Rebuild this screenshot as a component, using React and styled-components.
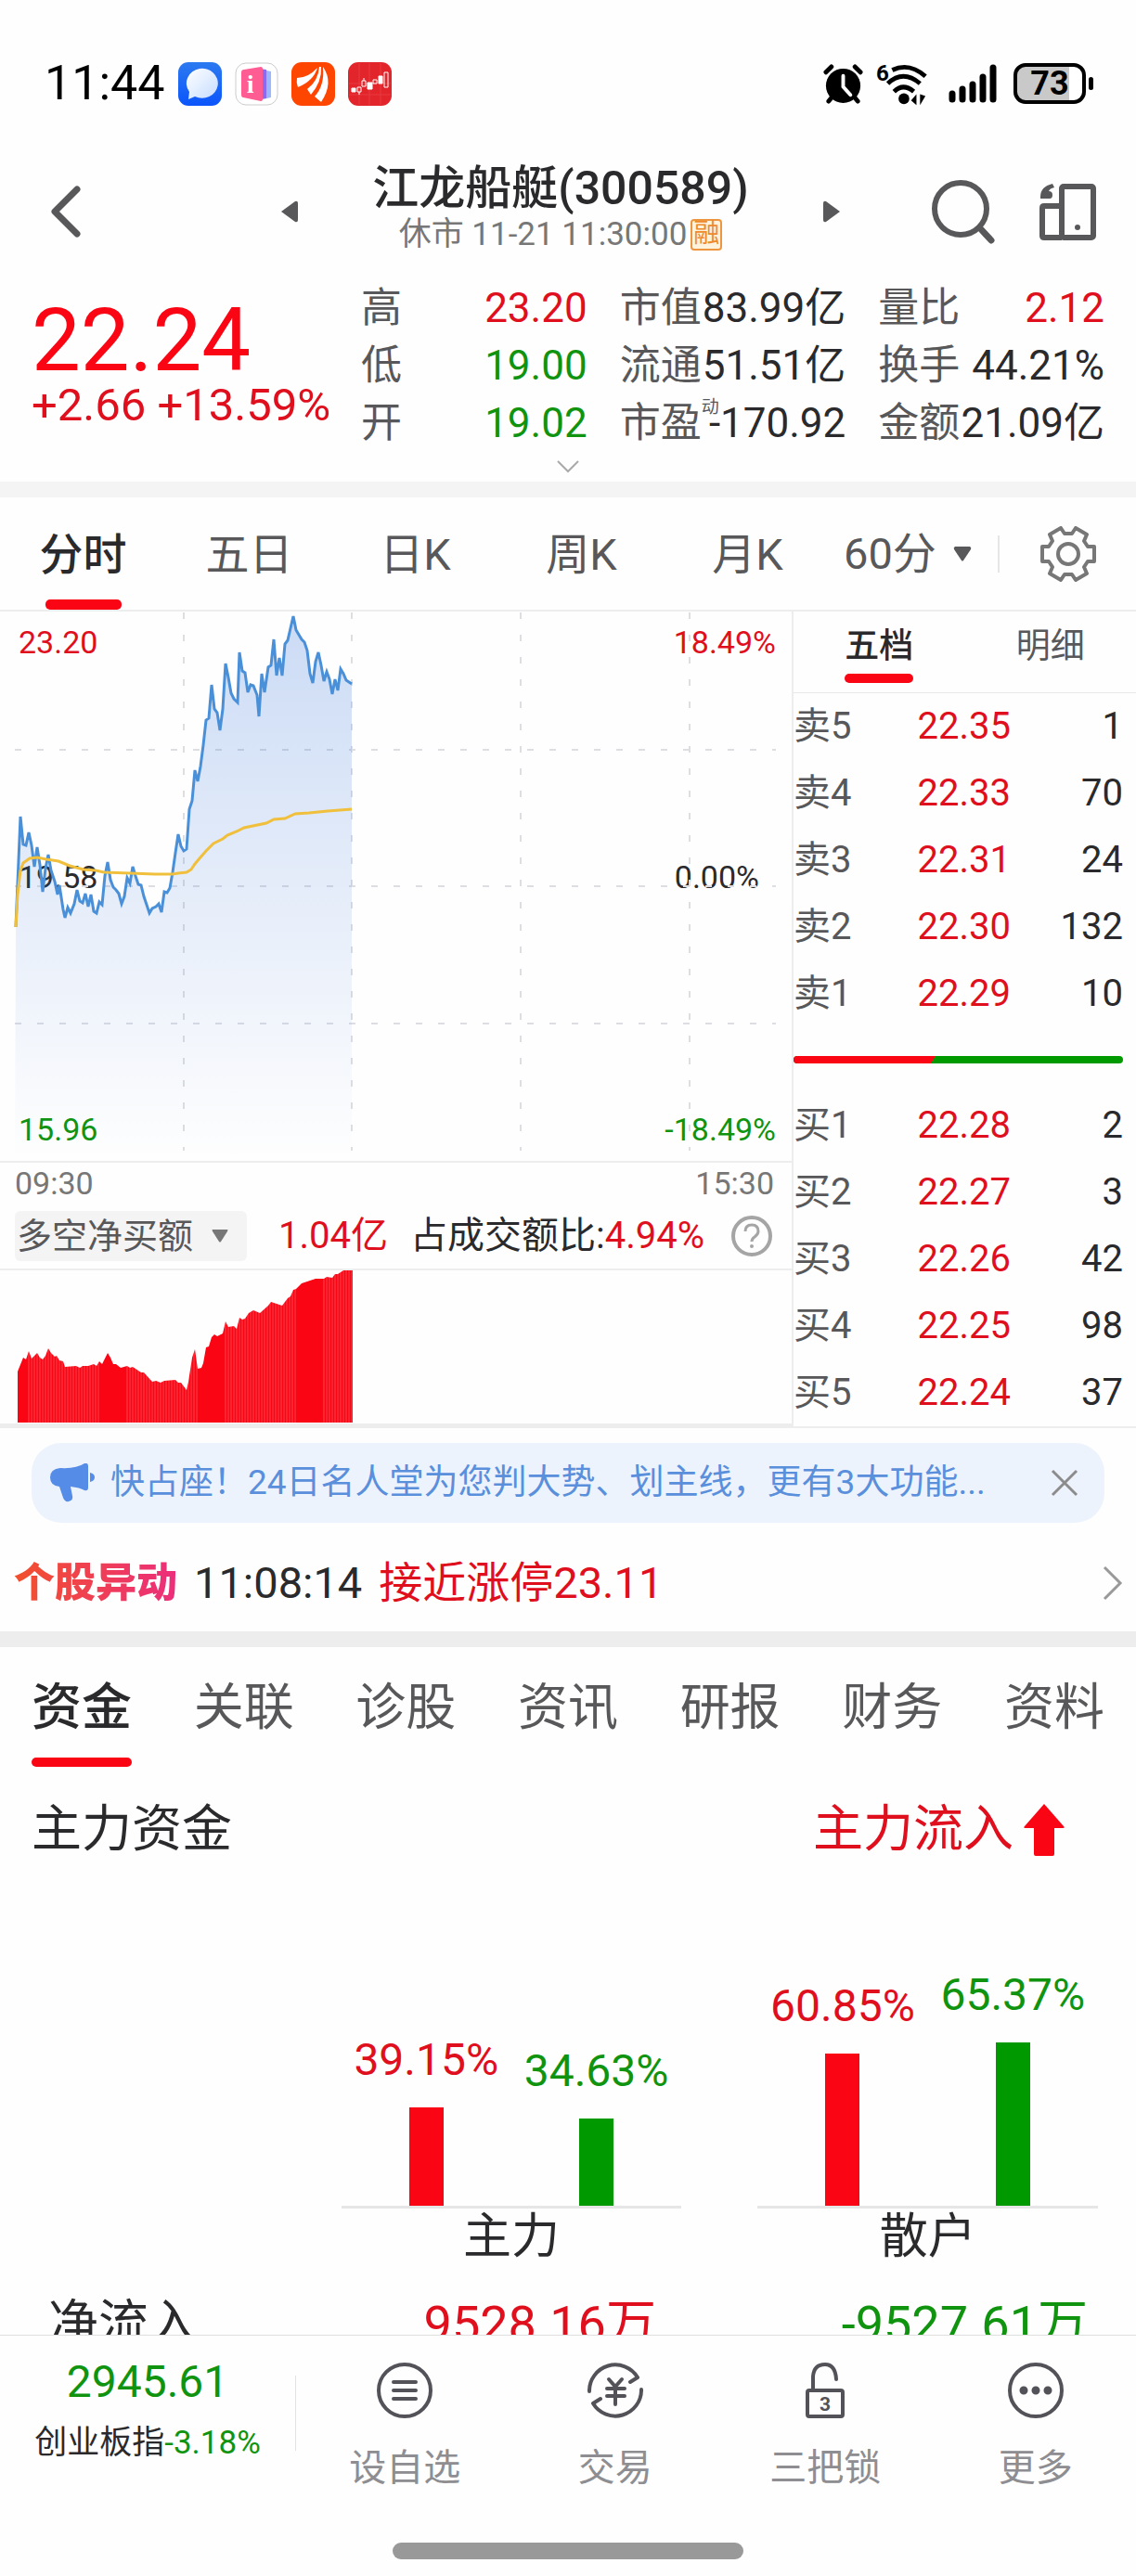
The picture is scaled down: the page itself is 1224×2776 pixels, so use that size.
import React, { useState } from "react";
import styled, { createGlobalStyle } from "styled-components";

const RED = "#e00f1e"
const GREEN = "#109410"
const DARK = "#2a2a2c"
const GRAY = "#58585a"

const tone = { up: RED, down: GREEN, flat: DARK }

const stats = [
    { label: "高", value: "23.20", tone: "up" },
    { label: "市值", value: "83.99亿", tone: "flat" },
    { label: "量比", value: "2.12", tone: "up" },
    { label: "低", value: "19.00", tone: "down" },
    { label: "流通", value: "51.51亿", tone: "flat" },
    { label: "换手", value: "44.21%", tone: "flat" },
    { label: "开", value: "19.02", tone: "down" },
    { label: "市盈", value: "-170.92", tone: "flat", note: "动" },
    { label: "金额", value: "21.09亿", tone: "flat" },
]

const periods = ["分时", "五日", "日K", "周K", "月K"]
const sections = ["资金", "关联", "诊股", "资讯", "研报", "财务", "资料"]

const sells = [
    ["卖5", "22.35", "1"],
    ["卖4", "22.33", "70"],
    ["卖3", "22.31", "24"],
    ["卖2", "22.30", "132"],
    ["卖1", "22.29", "10"],
]

const buys = [
    ["买1", "22.28", "2"],
    ["买2", "22.27", "3"],
    ["买3", "22.26", "42"],
    ["买4", "22.25", "98"],
    ["买5", "22.24", "37"],
]

const flows = [
    { name: "主力", inflow: 39.15, outflow: 34.63 },
    { name: "散户", inflow: 60.85, outflow: 65.37 },
]

const pricePoints = "17,340 22,221 25,251 28,252 31,238 34,252 37,275 40,254 43,273 46,302 49,277 52,262 55,279 59,291 62,305 64,295 68,321 70,330 73,319 76,325 80,315 83,300 86,312 89,314 92,304 95,318 98,305 101,323 104,325 107,313 110,316 113,285 116,270 119,289 122,297 125,300 128,304 131,315 134,307 137,287 140,293 143,275 146,285 149,294 152,295 155,307 161,325 164,320 168,318 171,315 174,324 177,302 180,303 183,298 186,281 189,260 192,240 195,253 198,258 201,256 204,213 207,204 210,171 213,183 216,167 219,144 222,117 225,115 228,79 231,105 234,109 237,128 240,105 243,56 246,71 249,88 252,94 256,98 258,44 261,64 264,66 267,87 270,79 273,80 277,90 279,113 282,67 285,87 289,60 292,58 295,30 298,69 301,50 304,69 307,35 310,31 313,18 316,5 319,20 325,30 328,33 331,42 334,67 337,77 340,54 343,44 346,58 349,75 352,65 355,73 358,89 361,73 364,85 367,62 370,67 373,74 379,78"

const averagePoints = "17,340 19,305 22,279 25,271 32,266 40,265 50,267 63,269 75,274 90,278 103,279 112,281 140,282 167,283 186,283 192,282 201,281 206,278 210,272 215,266 222,258 230,250 240,245 245,241 255,237 263,233 287,228 295,224 307,223 318,218 333,217 353,215 379,213"

const netPoints = "19,109 25,94 28,96 31,87 34,95 40,89 43,94 46,96 49,92 52,84 55,89 59,93 61,92 64,97 68,98 70,104 82,103 86,105 89,103 95,103 101,101 104,103 107,98 110,101 113,95 116,89 119,94 122,101 125,101 130,105 137,103 140,105 143,104 152,110 155,110 164,120 168,119 173,121 177,119 189,118 192,121 195,121 201,129 203,120 207,94 210,85 213,106 217,105 219,100 222,83 225,82 228,72 231,69 234,71 240,68 243,55 246,61 252,60 255,63 258,51 261,53 264,52 268,46 273,43 280,46 289,38 292,34 304,38 310,30 313,28 316,21 319,20 325,14 340,9 349,9 352,7 358,8 361,4 364,4 370,0 380,0"

const stripes = [[31, 107], [137, 213], [243, 319], [349, 379]].flatMap(([from, to]) => {
    const list = []
    for (let x = from; x <= to; x += 3) list.push(x)
    return list
})

function StatusIcons() {
    return (
        <StatusGroup>
            <svg width="43" height="43" viewBox="0 0 44 44" fill="none" stroke="#000" strokeLinecap="round">
                <circle cx="22" cy="24" r="19" fill="#000" stroke="none" />
                <path d="M3 9l6-6M41 9l-6-6M6 41l4-5M38 41l-4-5" strokeWidth="5" />
                <path d="M22 13v12l8 9" stroke="#fff" strokeWidth="4" />
            </svg>
            <svg width="56" height="48" viewBox="0 0 58 48" overflow="visible" fill="none" stroke="#000" strokeWidth="5">
                <text x="0" y="21" fontSize="25" fontWeight="700" fontFamily="Roboto" fill="#000" stroke="none">6</text>
                <path d="M18 9Q37 0 55 16M13 24q17-16 36 0M20 33q10-10 22 0" />
                <circle cx="31" cy="41" r="6" fill="#000" stroke="none" />
                <path d="M45 36v12l-6-5zM49 36v12l6-10z" fill="#000" stroke="none" />
            </svg>
            <Signal width="52" height="42" viewBox="0 0 52 42" stroke="#000" strokeWidth="7" strokeLinecap="round">
                <path d="M4 32v6M15 27v11M26 22v16M37 14v24M48 4v34" />
            </Signal>
            <Battery><BatteryText>73</BatteryText></Battery>
        </StatusGroup>
    )
}

function AppIcons() {
    return (
        <>
            <svg width="47" height="47" viewBox="0 0 47 47">
                <defs>
                    <linearGradient id="chatBg" x1="0" y1="0" x2="0" y2="1">
                        <stop offset="0" stopColor="#2c7af0" />
                        <stop offset="1" stopColor="#0b55fb" />
                    </linearGradient>
                    <linearGradient id="chatBall" x1="0" y1="0" x2="1" y2="1">
                        <stop offset="0" stopColor="#fff" />
                        <stop offset="1" stopColor="#c5dcff" />
                    </linearGradient>
                </defs>
                <rect width="47" height="47" rx="11" fill="url(#chatBg)" />
                <path d="M23 7a17 16 0 1 1-5 30l-7 3 1-8A17 16 0 0 1 23 7z" fill="url(#chatBall)" />
            </svg>
            <svg width="47" height="47" viewBox="0 0 47 47">
                <rect x="1" y="1" width="45" height="45" rx="11" fill="#fff" stroke="#ccc" />
                <path d="M30 8l9 2v28l-9 2z" fill="#9db7ff" />
                <path d="M26 7l8 1v31l-8 1z" fill="#8b6cf0" />
                <path d="M7 11q0-3 3-3l18-3q2 0 2 2v33q0 2-2 2L9 38q-2 0-2-3z" fill="#ff5c93" />
                <text x="13" y="33" fontSize="27" fontWeight="700" fontFamily="Liberation Serif" fill="#fff">i</text>
            </svg>
            <svg width="47" height="47" viewBox="0 0 47 47">
                <rect width="47" height="47" rx="11" fill="#ff4600" />
                <path d="M6 17q12 0 22-11-4 14-21 21Q5 22 6 17zM30 5q-1 15-13 24l4 6Q33 21 32 5zM34 5q2 20-9 32l7 6Q46 22 34 5z" fill="#fff" />
            </svg>
            <svg width="47" height="47" viewBox="0 0 47 47" fill="none" stroke="#fff" strokeWidth="1">
                <rect width="47" height="47" rx="11" fill="#e2252b" stroke="none" />
                <path d="M12 1v45M23 1v45M35 1v45M1 23h45M1 35h45" stroke="#e83a40" />
                <path d="M4 28h4v4H4zM21 22h5v7h-5zM33 15h4v8h-4z" fill="#fff" />
                <path d="M10 27h4v5h-4zM12 32v3M15 20h4v6h-4zM17 17v3M27 19h4v4h-4zM39 11h4v16h-4z" />
            </svg>
        </>
    )
}

function PriceChart() {
    return (
        <ChartBox>
            <ChartLabel $tone="up" $y="13px">23.20</ChartLabel>
            <ChartLabel $tone="up" $y="13px" $right="17px">18.49%</ChartLabel>
            <ChartLabel $tone="flat" $y="266px">19.58</ChartLabel>
            <ChartLabel $tone="flat" $y="266px" $right="35px">0.00%</ChartLabel>
            <ChartLabel $tone="down" $y="538px">15.96</ChartLabel>
            <ChartLabel $tone="down" $y="538px" $right="17px">-18.49%</ChartLabel>
            <Plot height="592" viewBox="0 0 853 592" preserveAspectRatio="none">
                <defs>
                    <linearGradient id="priceFill" gradientUnits="userSpaceOnUse" x1="0" y1="0" x2="0" y2="592">
                        <stop offset="0" stopColor="#2a6cd8" stopOpacity="0.24" />
                        <stop offset="1" stopColor="#2a6cd8" stopOpacity="0" />
                    </linearGradient>
                </defs>
                <path d="M16 149h820M16 296h820M16 444h820" stroke="#dedee2" strokeWidth="2" strokeDasharray="7 17" />
                <path d="M198 1v580M379 1v580M561 1v580M743 1v580" stroke="#dedee2" strokeWidth="2" strokeDasharray="7 17" />
                <polygon points={`16,592 ${pricePoints} 379,592`} fill="url(#priceFill)" />
                <polyline points={pricePoints} fill="none" stroke="#4a90d9" strokeWidth="3" />
                <polyline points={averagePoints} fill="none" stroke="#f0bf3c" strokeWidth="3" />
            </Plot>
        </ChartBox>
    )
}

function NetChart() {
    return (
        <Plot height="165" viewBox="0 0 853 165" preserveAspectRatio="none">
            <polygon points={`19,164 ${netPoints} 380,164`} fill="#fa0514" />
            <path d={stripes.map((x) => `M${x} 0v164`).join("")} stroke="#fff" strokeOpacity="0.25" strokeWidth="1" />
        </Plot>
    )
}

function BookTable({ rows, name }) {
    return (
        <Book aria-label={name}>
            <tbody>
                {rows.map(([level, price, amount]) => (
                    <tr key={level}>
                        <BookLevel scope="row">{level}</BookLevel>
                        <BookPrice>{price}</BookPrice>
                        <BookAmount>{amount}</BookAmount>
                    </tr>
                ))}
            </tbody>
        </Book>
    )
}

function FlowBar({ value, up }) {
    return (
        <FlowColumn>
            <FlowValue $tone={up ? "up" : "down"}>{value.toFixed(2)}%</FlowValue>
            <FlowFill $up={up} style={{ height: Math.round(value * 2.7) }} />
        </FlowColumn>
    )
}

const actions = [
    {
        name: "设自选",
        icon: (
            <>
                <circle cx="30" cy="30" r="28" />
                <path d="M18 21h24M18 30h24M18 39h24" strokeLinecap="round" />
            </>
        ),
    },
    {
        name: "交易",
        icon: (
            <>
                <path d="M2 31A28 28 0 0 1 54 16l-8 5M58 29A28 28 0 0 1 6 44l8-5" strokeLinecap="round" strokeLinejoin="round" />
                <path d="M23 18l7 8 7-8M30 26v19M21 28h19M21 36h19" strokeLinecap="round" />
            </>
        ),
    },
    {
        name: "三把锁",
        icon: (
            <>
                <rect x="11" y="30" width="38" height="28" rx="2" />
                <path d="M17 30V15Q18 2 30 2q11 0 12 16" strokeLinecap="round" />
                <text x="24" y="52" fontSize="21" fontWeight="700" fontFamily="Roboto" fill="#525258" stroke="none">3</text>
            </>
        ),
    },
    {
        name: "更多",
        icon: (
            <>
                <circle cx="30" cy="30" r="28" />
                <path d="M17 30h0M30 30h0M43 30h0" strokeWidth="9" strokeLinecap="round" />
            </>
        ),
    },
]

function App() {
    const [period, setPeriod] = useState("分时")
    const [section, setSection] = useState("资金")
    const [book, setBook] = useState("五档")

    return (
        <Screen>
            <GlobalStyle />
            <StatusBar>
                <StatusGroup>
                    <Clock>11:44</Clock>
                    <AppIcons />
                </StatusGroup>
                <StatusIcons />
            </StatusBar>

            <Header>
                <IconButton aria-label="返回">
                    <svg width="36" height="60" viewBox="0 0 36 60" fill="none" stroke={GRAY} strokeWidth="7" strokeLinecap="round" strokeLinejoin="round">
                        <path d="M31 6L7 30l24 24" />
                    </svg>
                </IconButton>
                <TitleGroup>
                    <IconButton aria-label="上一只">
                        <svg width="18" height="24" viewBox="0 0 18 24" fill={GRAY}><path d="M0 12L15 1q3-1 3 2v18q0 3-3 2z" /></svg>
                    </IconButton>
                    <TitleText>
                        <Title>江龙船艇(300589)</Title>
                        <Subtitle>休市 11-21 11:30:00<Badge>融</Badge></Subtitle>
                    </TitleText>
                    <IconButton aria-label="下一只">
                        <svg width="18" height="24" viewBox="0 0 18 24" fill={GRAY}><path d="M18 12L3 1Q0 0 0 3v18q0 3 3 2z" /></svg>
                    </IconButton>
                </TitleGroup>
                <HeaderTools>
                    <IconButton aria-label="搜索">
                        <svg width="70" height="70" viewBox="0 0 70 70" fill="none" stroke={GRAY} strokeWidth="6" strokeLinecap="round">
                            <circle cx="32" cy="32" r="28" />
                            <path d="M53 53l12 13" strokeWidth="7" />
                        </svg>
                    </IconButton>
                    <IconButton aria-label="分屏">
                        <svg width="62" height="62" viewBox="0 0 62 62" fill="none" stroke={GRAY} strokeWidth="6" strokeLinejoin="round">
                            <rect x="24" y="4" width="34" height="55" rx="2" />
                            <path d="M24 25H5q-2 0-2 2v30q0 2 2 2h19" />
                            <circle cx="41" cy="48" r="3" fill={GRAY} stroke="none" />
                            <path d="M14 1q-13 3-13 14v2h10q3 0 3-4t-4-4q1-3 6-4z" fill={GRAY} stroke="none" />
                        </svg>
                    </IconButton>
                </HeaderTools>
            </Header>

            <Quote>
                <div>
                    <Price>22.24</Price>
                    <Change>+2.66 +13.59%</Change>
                </div>
                <Stats>
                    {stats.map((item) => (
                        <Stat key={item.label}>
                            <StatLabel>{item.label}{item.note && <Note>{item.note}</Note>}</StatLabel>
                            <StatValue $tone={item.tone}>{item.value}</StatValue>
                        </Stat>
                    ))}
                </Stats>
            </Quote>
            <MoreButton aria-label="展开">
                <svg width="24" height="14" viewBox="0 0 24 14" fill="none" stroke="#aaa" strokeWidth="2"><path d="M1 1l11 11L23 1" /></svg>
            </MoreButton>
            <Divider $color="#f4f4f4" />

            <PeriodBar>
                <PeriodTabs>
                    {periods.map((name) => (
                        <PeriodTab key={name} $active={name === period} onClick={() => setPeriod(name)}>{name}</PeriodTab>
                    ))}
                </PeriodTabs>
                <PeriodPick>
                    <PeriodSelect aria-label="分钟周期">
                        <option>60分</option>
                    </PeriodSelect>
                    <svg width="20" height="16" viewBox="0 0 20 16" fill={GRAY}><path d="M2 0h16q2 1 1 3l-8 12q-1 1-2 0L1 3Q0 1 2 0z" /></svg>
                </PeriodPick>
                <SettingsButton aria-label="设置">
                    <svg width="60" height="60" viewBox="0 0 60 60" fill="none" stroke="#777" strokeWidth="4" strokeLinejoin="round">
                        <path d="M22 2l4 6h8l4-6 12 7-3 7 4 6h7v16h-7l-4 6 3 7-12 7-4-6h-8l-4 6-12-7 3-7-4-6H2V22h7l4-6-3-7z" />
                        <circle cx="30" cy="30" r="11" />
                    </svg>
                </SettingsButton>
            </PeriodBar>

            <Market>
                <ChartSide>
                    <PriceChart />
                    <TimeRow><span>09:30</span><span>15:30</span></TimeRow>
                    <IndicatorRow>
                        <IndicatorPick>
                            <IndicatorSelect aria-label="指标">
                                <option>多空净买额</option>
                            </IndicatorSelect>
                            <svg width="18" height="14" viewBox="0 0 18 14" fill="#777"><path d="M1 0h16q1 0 0 2l-7 11q-1 1-2 0L1 2Q0 0 1 0z" /></svg>
                        </IndicatorPick>
                        <NetValue>1.04亿</NetValue>
                        <Ratio>占成交额比:<em>4.94%</em></Ratio>
                        <HelpButton aria-label="说明">
                            <svg width="46" height="46" viewBox="0 0 46 46" fill="none" stroke="#a5a5a5" strokeWidth="4">
                                <circle cx="23" cy="23" r="20" />
                                <path d="M16 18q0-7 7-7t7 7q0 3-4 6-3 2-3 5" strokeWidth="3" />
                                <circle cx="23" cy="34" r="2" fill="#a5a5a5" stroke="none" />
                            </svg>
                        </HelpButton>
                    </IndicatorRow>
                    <NetChart />
                </ChartSide>
                <BookSide>
                    <BookTabs>
                        {["五档", "明细"].map((name) => (
                            <BookTab key={name} $active={name === book} onClick={() => setBook(name)}><span>{name}</span></BookTab>
                        ))}
                    </BookTabs>
                    <BookTable rows={sells} name="卖盘" />
                    <BookRatio>
                        <svg width="100%" height="8" viewBox="0 0 355 8" preserveAspectRatio="none">
                            <rect width="355" height="8" rx="4" fill="#009900" />
                            <path d="M4 0h149l-5 8H4Q0 8 0 4t4-4z" fill="#fa0514" />
                        </svg>
                    </BookRatio>
                    <BookTable rows={buys} name="买盘" />
                </BookSide>
            </Market>

            <Notice>
                <svg width="48" height="42" viewBox="0 0 48 42" fill="#548ce8">
                    <path d="M11 5q17 1 26-5 4-1 4 3v23q0 4-4 3-5-3-15-4l2 10q1 5-4 6-4 1-6-4l-4-12Q0 24 0 15 0 6 11 5zM43 10q5 1 5 5t-5 5z" />
                </svg>
                <NoticeText href="#notice">快占座！24日名人堂为您判大势、划主线，更有3大功能...</NoticeText>
                <IconButton aria-label="关闭">
                    <svg width="30" height="30" viewBox="0 0 30 30" stroke="#8c8c8c" strokeWidth="3"><path d="M2 2l26 26M28 2L2 28" /></svg>
                </IconButton>
            </Notice>

            <Alert href="#alert">
                <AlertTag>个股异动</AlertTag>
                <AlertTime>11:08:14</AlertTime>
                <AlertText>接近涨停23.11</AlertText>
                <svg width="22" height="38" viewBox="0 0 22 38" fill="none" stroke="#999" strokeWidth="3"><path d="M2 2l17 17L2 36" /></svg>
            </Alert>
            <Divider $color="#ededed" />

            <SectionTabs>
                {sections.map((name) => (
                    <SectionTab key={name} $active={name === section} onClick={() => setSection(name)}>{name}</SectionTab>
                ))}
            </SectionTabs>

            <FundHead>
                <FundTitle>主力资金</FundTitle>
                <FundTrend>
                    主力流入
                    <svg width="44" height="56" viewBox="0 0 44 56" fill="#fa0514"><path d="M22 0l21 24q2 2-1 2h-9v28q0 2-2 2H13q-2 0-2-2V26H2q-3 0-1-2z" /></svg>
                </FundTrend>
            </FundHead>

            <Flows>
                {flows.map((flow) => (
                    <Flow key={flow.name}>
                        <FlowPlot>
                            <FlowBar value={flow.inflow} up />
                            <FlowBar value={flow.outflow} />
                        </FlowPlot>
                        <FlowName>{flow.name}</FlowName>
                    </Flow>
                ))}
            </Flows>

            <Body>
                <NetTable>
                    <tbody>
                        <tr>
                            <th scope="row">净流入</th>
                            <NetCell $tone="up">9528.16万</NetCell>
                            <NetCell $tone="down">-9527.61万</NetCell>
                        </tr>
                    </tbody>
                </NetTable>
            </Body>

            <Footer>
                <FooterRow>
                    <IndexBox>
                        <IndexValue>2945.61</IndexValue>
                        <IndexName>创业板指<em>-3.18%</em></IndexName>
                    </IndexBox>
                    <Actions>
                        {actions.map((action) => (
                            <Action key={action.name}>
                                <svg width="60" height="60" viewBox="0 0 60 60" fill="none" stroke="#525258" strokeWidth="4">{action.icon}</svg>
                                {action.name}
                            </Action>
                        ))}
                    </Actions>
                </FooterRow>
                <HomeBar />
            </Footer>
        </Screen>
    )
}

export default App

const GlobalStyle = createGlobalStyle`
    * {
        box-sizing: border-box;
    }
    body {
        margin: 0;
        background: #fefefe;
        color: ${DARK};
        font-family: Roboto, "Noto Sans CJK SC", sans-serif;
    }
    button, select {
        padding: 0;
        border: none;
        background: none;
        color: inherit;
        font: inherit;
        appearance: none;
    }
    svg {
        display: block;
        flex-shrink: 0;
    }
    em {
        font-style: normal;
    }
`

const Screen = styled.div`
    height: 100vh;
    display: flex;
    flex-direction: column;
    overflow: hidden;

    & > * {
        flex-shrink: 0;
    }
`

const StatusBar = styled.div`
    display: flex;
    align-items: center;
    justify-content: space-between;
    padding: 65px 54px 63px 48px;
    height: 178px;
`

const StatusGroup = styled.div`
    display: flex;
    align-items: center;
    gap: 14px;
`

const Clock = styled.span`
    font-size: 52px;
    line-height: 50px;
    color: #000;
`

const Signal = styled.svg`
    margin: 0 4px 0 8px;
`

const Battery = styled.div`
    width: 78px;
    height: 44px;
    display: flex;
    align-items: center;
    justify-content: center;
    position: relative;
    border: 4px solid #000;
    border-radius: 13px;
    background: linear-gradient(90deg, #c9c9c9 80%, #fff 80%);

    &::after {
        content: "";
        width: 5px;
        height: 14px;
        position: absolute;
        top: 11px;
        right: -12px;
        border-radius: 3px;
        background: #000;
    }
`

const BatteryText = styled.span`
    font-size: 36px;
    line-height: 36px;
    font-weight: 700;
    color: #000;
`

const IconButton = styled.button`
    display: flex;
    align-items: center;
    justify-content: center;
`

const Header = styled.header`
    height: 98px;
    display: grid;
    grid-template-columns: 1fr auto 1fr;
    align-items: center;
    padding: 0 42px 0 52px;

    & > :first-child {
        justify-self: start;
    }
`

const TitleGroup = styled.div`
    display: flex;
    align-items: center;
    gap: 80px;
    margin-right: 26px;
`

const TitleText = styled.div`
    display: flex;
    flex-direction: column;
    align-items: center;
`

const Title = styled.h1`
    margin: 0;
    font-size: 50px;
    line-height: 50px;
    font-weight: 500;
`

const Subtitle = styled.div`
    display: flex;
    align-items: center;
    gap: 4px;
    font-size: 35px;
    line-height: 50px;
    color: #777;
`

const Badge = styled.span`
    width: 34px;
    height: 34px;
    border: 2px solid #ee9540;
    border-radius: 4px;
    background: #fdf3dc;
    color: #ee8a2c;
    font-size: 28px;
    line-height: 28px;
    text-align: center;
`

const HeaderTools = styled.div`
    display: flex;
    align-items: center;
    justify-content: flex-end;
    gap: 47px;
`

const Quote = styled.section`
    display: grid;
    grid-template-columns: 355px 1fr;
    padding: 25px 34px 0;
`

const Price = styled.div`
    padding-top: 22px;
    font-size: 94px;
    line-height: 88px;
    color: #fa0514;
`

const Change = styled.div`
    font-size: 49px;
    line-height: 52px;
    color: ${RED};
    white-space: nowrap;
`

const Stats = styled.div`
    display: grid;
    grid-template-columns: repeat(3, 1fr);
    grid-auto-rows: 62px;
    column-gap: 35px;
`

const Stat = styled.div`
    display: flex;
    align-items: center;
    justify-content: space-between;
    font-size: 44px;
    line-height: 62px;
    white-space: nowrap;
`

const StatLabel = styled.span`
    position: relative;
    color: ${GRAY};
`

const Note = styled.sup`
    position: absolute;
    left: 100%;
    top: 4px;
    font-size: 19px;
    line-height: 20px;
`

const StatValue = styled.span`
    color: ${(props) => tone[props.$tone]};
`

const MoreButton = styled(IconButton)`
    height: 32px;
`

const Divider = styled.div`
    height: 17px;
    background: ${(props) => props.$color};
`

const PeriodBar = styled.nav`
    height: 123px;
    display: flex;
    align-items: center;
    border-bottom: 2px solid #ededed;
    font-size: 47px;
    color: ${GRAY};
`

const PeriodTabs = styled.div`
    flex: 1;
    height: 100%;
    display: flex;
`

const PeriodTab = styled.button`
    flex: 1;
    position: relative;
    padding-bottom: 6px;
    color: ${(props) => (props.$active ? DARK : GRAY)};
    font-weight: ${(props) => (props.$active ? 500 : 400)};

    &::after {
        content: "";
        display: ${(props) => (props.$active ? "block" : "none")};
        width: 82px;
        height: 11px;
        position: absolute;
        bottom: 0;
        left: calc(50% - 41px);
        border-radius: 5px;
        background: #fa0514;
    }
`

const PeriodPick = styled.div`
    width: 182px;
    height: 40px;
    display: flex;
    align-items: center;
    gap: 18px;
    padding-left: 14px;
    border-right: 2px solid #e6e6e6;
`

const PeriodSelect = styled.select`
    width: 100px;
    height: 60px;
    line-height: 60px;
`

const SettingsButton = styled(IconButton)`
    width: 147px;
`

const Market = styled.section`
    display: grid;
    grid-template-columns: minmax(0, 1fr) 371px;
`

const ChartSide = styled.div`
    border-bottom: 5px solid #ededed;
`

const ChartBox = styled.div`
    position: relative;
    border-bottom: 2px solid #ededed;
`

const Plot = styled.svg`
    width: 100%;
    position: relative;
`

const ChartLabel = styled.span`
    position: absolute;
    top: ${(props) => props.$y};
    ${(props) => (props.$right ? `right: ${props.$right};` : "left: 20px;")}
    font-size: 34px;
    line-height: 40px;
    color: ${(props) => tone[props.$tone]};
`

const TimeRow = styled.div`
    display: flex;
    justify-content: space-between;
    padding: 0 19px 0 16px;
    font-size: 34px;
    line-height: 44px;
    color: #777;
`

const IndicatorRow = styled.div`
    height: 72px;
    display: flex;
    align-items: center;
    padding: 0 20px 0 16px;
    border-bottom: 2px solid #ededed;
    font-size: 40px;
    line-height: 54px;
    white-space: nowrap;
`

const IndicatorPick = styled.div`
    width: 250px;
    height: 54px;
    display: flex;
    align-items: center;
    gap: 20px;
    padding-left: 2px;
    border-radius: 6px;
    background: #f4f4f4;
    color: ${GRAY};
`

const IndicatorSelect = styled.select`
    width: 190px;
    height: 54px;
    font-size: 38px;
`

const NetValue = styled.span`
    margin-left: 34px;
    color: ${RED};
`

const Ratio = styled.span`
    margin-left: 24px;

    em {
        color: ${RED};
    }
`

const HelpButton = styled(IconButton)`
    margin-left: auto;
`

const BookSide = styled.div`
    border-left: 2px solid #ededed;
    border-bottom: 2px solid #ededed;
`

const BookTabs = styled.div`
    height: 88px;
    display: flex;
    border-bottom: 1px solid #e8e8e8;
`

const BookTab = styled.button`
    flex: 1;
    padding-bottom: 8px;
    font-size: 37px;
    line-height: 58px;
    font-weight: ${(props) => (props.$active ? 500 : 400)};
    color: ${(props) => (props.$active ? DARK : GRAY)};

    span {
        display: inline-block;
        padding-top: 6px;
    }

    span::after {
        content: "";
        display: block;
        height: 10px;
        border-radius: 5px;
        background: ${(props) => (props.$active ? "#fa0514" : "transparent")};
    }
`

const Book = styled.table`
    width: 100%;
    border-collapse: collapse;
    table-layout: fixed;
    font-size: 40px;

    tr {
        height: 72px;
    }
    th, td {
        padding: 0;
        line-height: 60px;
    }
`

const BookLevel = styled.th`
    width: 92px;
    text-align: left;
    font-weight: 400;
    color: ${GRAY};
`

const BookPrice = styled.td`
    width: 142px;
    text-align: right;
    color: ${RED};
`

const BookAmount = styled.td`
    text-align: right;

    && {
        padding-right: 14px;
    }
`

const BookRatio = styled.div`
    height: 70px;
    display: flex;
    align-items: center;
    padding-right: 14px;
`

const Notice = styled.div`
    height: 86px;
    display: flex;
    align-items: center;
    margin: 16px 34px;
    padding: 0 28px 0 20px;
    border-radius: 32px;
    background: #edf3fc;
`

const NoticeText = styled.a`
    flex: 1;
    padding-left: 17px;
    font-size: 37px;
    line-height: 50px;
    color: #5a8fdc;
    text-decoration: none;
    white-space: nowrap;
`

const Alert = styled.a`
    height: 101px;
    display: flex;
    align-items: center;
    gap: 18px;
    padding: 0 14px 4px 15px;
    font-size: 47px;
    line-height: 60px;
    text-decoration: none;

    svg {
        margin-left: auto;
    }
`

const AlertTag = styled.span`
    font-size: 44px;
    font-weight: 900;
    color: transparent;
    background: linear-gradient(90deg, #f2502c, #ec2e7c);
    background-clip: text;
`

const AlertTime = styled.span`
    color: ${DARK};
`

const AlertText = styled.span`
    color: ${RED};
`

const SectionTabs = styled.nav`
    height: 129px;
    display: flex;
    justify-content: space-between;
    padding: 0 34px;
`

const SectionTab = styled.button`
    display: flex;
    flex-direction: column;
    justify-content: space-between;
    padding-top: 36px;
    font-size: 54px;
    line-height: 60px;
    font-weight: ${(props) => (props.$active ? 500 : 400)};
    color: ${(props) => (props.$active ? DARK : GRAY)};

    &::after {
        content: "";
        width: 100%;
        height: 10px;
        border-radius: 5px;
        background: ${(props) => (props.$active ? "#fa0514" : "transparent")};
    }
`

const FundHead = styled.div`
    display: flex;
    justify-content: space-between;
    padding: 38px 77px 0 34px;
    font-size: 54px;
    line-height: 60px;
`

const FundTitle = styled.h2`
    margin: 0;
    font-size: 54px;
    font-weight: 400;
`

const FundTrend = styled.div`
    display: flex;
    align-items: center;
    gap: 11px;
    color: ${RED};
`

const Flows = styled.div`
    display: flex;
    justify-content: flex-end;
    gap: 82px;
    padding-right: 41px;
`

const Flow = styled.div`
    width: 31%;
`

const FlowPlot = styled.div`
    height: 378px;
    display: flex;
    align-items: flex-end;
    border-bottom: 3px solid #e6e6e6;
`

const FlowColumn = styled.div`
    flex: 1;
    display: flex;
    flex-direction: column;
    align-items: center;
`

const FlowValue = styled.span`
    margin-bottom: 21px;
    font-size: 48px;
    line-height: 60px;
    color: ${(props) => tone[props.$tone]};
`

const FlowFill = styled.div`
    width: 37px;
    background: ${(props) => (props.$up ? "#fa0514" : "#009900")};
`

const FlowName = styled.div`
    font-size: 52px;
    line-height: 62px;
    text-align: center;
`

const Body = styled.div`
    && {
        flex: 1 1 0;
        min-height: 0;
        overflow: hidden;
    }
`

const NetTable = styled.table`
    width: 100%;
    border-collapse: collapse;
    font-size: 54px;
    line-height: 126px;

    th {
        padding: 0 0 0 52px;
        text-align: left;
        font-weight: 400;
    }
`

const NetCell = styled.td`
    width: 38%;
    padding: 0 52px 0 0;
    text-align: right;
    color: ${(props) => tone[props.$tone]};
`

const Footer = styled.footer`
    display: flex;
    flex-direction: column;
    align-items: center;
    padding-bottom: 18px;
    border-top: 1px solid #e0e0e0;
    background: #fefefe;
`

const FooterRow = styled.div`
    width: 100%;
    height: 223px;
    display: flex;
`

const IndexBox = styled.div`
    width: 318px;
    padding-top: 19px;
    text-align: center;
`

const IndexValue = styled.div`
    font-size: 48px;
    line-height: 62px;
    color: ${GREEN};
`

const IndexName = styled.div`
    font-size: 35px;
    line-height: 70px;

    em {
        color: ${GREEN};
    }
`

const Actions = styled.div`
    flex: 1;
    display: flex;
    margin-right: -5px;

    &::before {
        content: "";
        width: 1px;
        height: 81px;
        margin: 43px 4px 0 0;
        background: #e2e2e2;
    }
`

const Action = styled.button`
    flex: 1;
    display: flex;
    flex-direction: column;
    align-items: center;
    gap: 24px;
    padding-top: 29px;
    font-size: 40px;
    line-height: 60px;
    color: #8e8e92;
`

const HomeBar = styled.div`
    width: 378px;
    height: 18px;
    border-radius: 9px;
    background: #999;
`
